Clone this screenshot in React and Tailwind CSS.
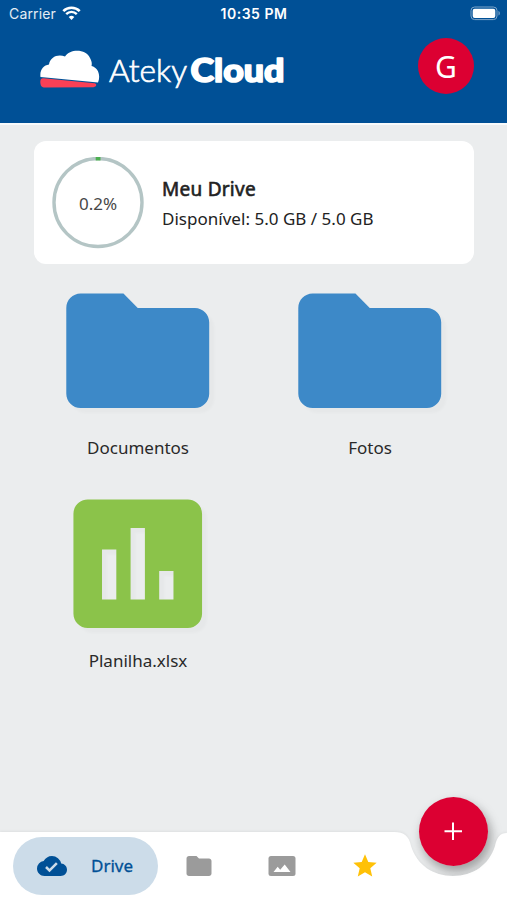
import React from "react";
import {
  MdAssessment,
  MdCloudDone,
  MdFolder,
  MdStar,
} from "react-icons/md";

const files = [
  { name: "Documentos", type: "folder" },
  { name: "Fotos", type: "folder" },
  { name: "Planilha.xlsx", type: "sheet" },
];

const StatusBar = () => (
  <div className="grid h-[27px] grid-cols-3 items-center pl-[9px] pr-[6px] font-['Inter',sans-serif] text-white">
    <div className="flex items-center gap-[6px]">
      <span className="text-[14px] tracking-[0.15px] text-white/90">Carrier</span>
      <svg width="19" height="15" viewBox="0 0 19 15" fill="none">
        <path d="M1.3 5.1a11.6 11.6 0 0 1 16.4 0" stroke="white" strokeWidth="2.6" />
        <path d="M4.2 8.1a7.5 7.5 0 0 1 10.6 0" stroke="white" strokeWidth="2.4" />
        <path d="M9.5 14 6.7 11.1a4 4 0 0 1 5.6 0z" fill="white" />
      </svg>
    </div>
    <span className="-ml-[2px] text-center text-[14px] font-semibold tracking-[0.5px]">
      10:35 PM
    </span>
    <svg className="justify-self-end" width="31" height="15" viewBox="0 0 31 15">
      <rect x="1" y="1" width="26" height="12.6" rx="3.6" fill="none" stroke="#7fa6ca" />
      <rect x="2.7" y="2.7" width="22.6" height="9.2" rx="2" fill="white" />
      <path d="M28.5 5v4.6c1.8-.7 1.8-3.9 0-4.6z" fill="#7fa6ca" />
    </svg>
  </div>
);

const Logo = () => (
  <svg width="250" height="50" viewBox="0 0 250 50">
    <path
      d="M.5 36C-.5 29 3.500 24.200 9 23.500C10 16 18 12.500 25 15.500C30 7.500 46 7.500 50 17C52 20.500 52 23 51.500 25C58 26.500 61 34 58 41.500z"
      fill="white"
    />
    <path
      d="M3.500 37.200 54.500 42.300C57 42.700 57 45.700 53.500 46.200L5 46.500C1.800 46.500 .300 45 .300 40.500C.500 38 1.500 37 3.500 37.200z"
      fill="#fa4056"
    />
    <text
      x="69"
      y="40.500"
      fill="white"
      fontFamily="Lato, sans-serif"
      fontWeight="300"
      fontSize="32"
      textLength="78"
      lengthAdjust="spacingAndGlyphs"
      stroke="white"
      strokeWidth="0.700"
    >
      Ateky
    </text>
    <text
      x="150.500"
      y="40.500"
      fill="white"
      fontFamily="Lato, sans-serif"
      fontWeight="900"
      fontSize="32"
      textLength="94"
      lengthAdjust="spacingAndGlyphs"
      stroke="white"
      strokeWidth="1.600"
      strokeLinejoin="round"
    >
      Cloud
    </text>
  </svg>
);

const Header = () => (
  <header className="h-[125px] border-b-2 border-[#f8fafb] bg-[#005096]">
    <StatusBar />
    <div className="flex items-start justify-between pl-10 pr-[33px] pt-[11px]">
      <div className="pt-[3px]">
        <Logo />
      </div>
      <div className="flex size-[56px] items-center justify-center rounded-full bg-[#dc0032] pt-[2px] text-[30px] leading-none text-white">
        G
      </div>
    </div>
  </header>
);

const StorageCard = () => (
  <section className="ml-[34px] mr-[33px] mt-[16px] flex h-[123px] items-center rounded-[12px] bg-white pl-[18px]">
    <div className="grid size-[92px] place-items-center">
      <svg className="col-start-1 row-start-1" width="92" height="92" viewBox="0 0 92 92" fill="none">
        <circle cx="46" cy="45.500" r="44" stroke="#b4c5c5" strokeWidth="3.400" />
        <path d="M43.700 1.700h4.800" stroke="#4caf50" strokeWidth="3.600" />
      </svg>
      <span className="col-start-1 row-start-1 pt-[2px] text-[17px] text-[#484848]">0.2%</span>
    </div>
    <div className="ml-[18px] whitespace-nowrap pt-[2px] text-[#222]">
      <h2 className="text-[19px] leading-[30px] tracking-[0.25px] [-webkit-text-stroke:0.6px_#222]">
        Meu Drive
      </h2>
      <p className="text-[17px] leading-[30px] tracking-[0.02px]">
        Disponível: 5.0 GB / 5.0 GB
      </p>
    </div>
  </section>
);

const FileItem = ({ file }) => (
  <div className="flex h-[213px] flex-col items-center">
    {file.type === "folder" ? (
      <svg
        className="size-[171.500px] shrink-0 fill-[#3d89c8] drop-shadow-[5px_5px_1px_rgba(0,0,0,0.02)]"
        viewBox="0 0 24 24"
      >
        <path d="M10 4H4c-1.100 0-2 .900-2 2v12c0 1.100.900 2 2 2h16c1.100 0 2-.900 2-2V8c0-1.100-.900-2-2-2h-8z" />
      </svg>
    ) : (
      <MdAssessment className="size-[171.500px] shrink-0 text-[#8bc34a] drop-shadow-[5px_5px_1px_rgba(0,0,0,0.02)]" />
    )}
    <span className="text-[17px] leading-6 text-[#292929]">{file.name}</span>
  </div>
);

const PhotoIcon = () => (
  <svg width="28" height="20" viewBox="0 0 28 20">
    <rect x=".500" width="27" height="20" rx="2.500" fill="#9b9b9b" />
    <path d="m5.500 16 4.200-5.300 2.500 3L16.700 8.500 22.500 16z" fill="white" />
  </svg>
);

const BottomNav = () => (
  <nav className="relative h-[74px]">
    {/* shadow sits under the bar so it only shows inside the notch */}
    <div className="absolute right-[19px] top-[-29px] size-[69px] rounded-full shadow-[3px_6px_12px_rgba(0,0,0,0.28)]" />
    <svg
      className="absolute bottom-0 left-0 drop-shadow-[0_-1px_1px_rgba(0,0,0,0.05)]"
      width="507"
      height="68"
      viewBox="0 0 507 68"
    >
      <path
        d="M0 0H394C404 0 409 4 411 14C417 33 433 44 453 44C473 44 489 33 495 14C497 5 500 1 507 1V68H0z"
        fill="white"
      />
    </svg>
    <div className="relative flex h-full items-center pl-[13px] pt-[6px]">
      <button className="flex h-[58px] w-[145px] items-center rounded-full bg-[#ccdce9] pl-6 text-[#005096]">
        <MdCloudDone className="size-[30px]" />
        <span className="ml-6 text-[17px] [-webkit-text-stroke:0.3px_#005096]">Drive</span>
      </button>
      <button className="ml-[26px] text-[#9b9b9b]">
        <MdFolder className="size-[30px]" />
      </button>
      <button className="ml-[54px]">
        <PhotoIcon />
      </button>
      <button className="ml-[55px] text-[#ffc107]">
        <MdStar className="size-[28px]" />
      </button>
    </div>
    <button
      aria-label="Adicionar"
      className="absolute right-[19px] top-[-29px] flex size-[69px] items-center justify-center rounded-full bg-[#dc0032] shadow-[3px_5px_8px_rgba(0,0,0,0.08)]"
    >
      <svg width="19" height="19" viewBox="0 0 19 19">
        <path d="M9 .500v17.500M.500 9.300h17.500" stroke="white" strokeWidth="2" />
      </svg>
    </button>
  </nav>
);

const App = () => {
  return (
    <div className="flex h-[900px] w-[507px] flex-col overflow-hidden bg-[#ebedee] font-['Noto_Sans','Open_Sans',sans-serif]">
      <Header />
      <main className="flex-1">
        <StorageCard />
        <div className="ml-[22px] mr-[21px] mt-[0.5px] grid grid-cols-[232px_232px]">
          {files.map((file) => (
            <FileItem key={file.name} file={file} />
          ))}
        </div>
      </main>
      <BottomNav />
    </div>
  );
};

export default App;
